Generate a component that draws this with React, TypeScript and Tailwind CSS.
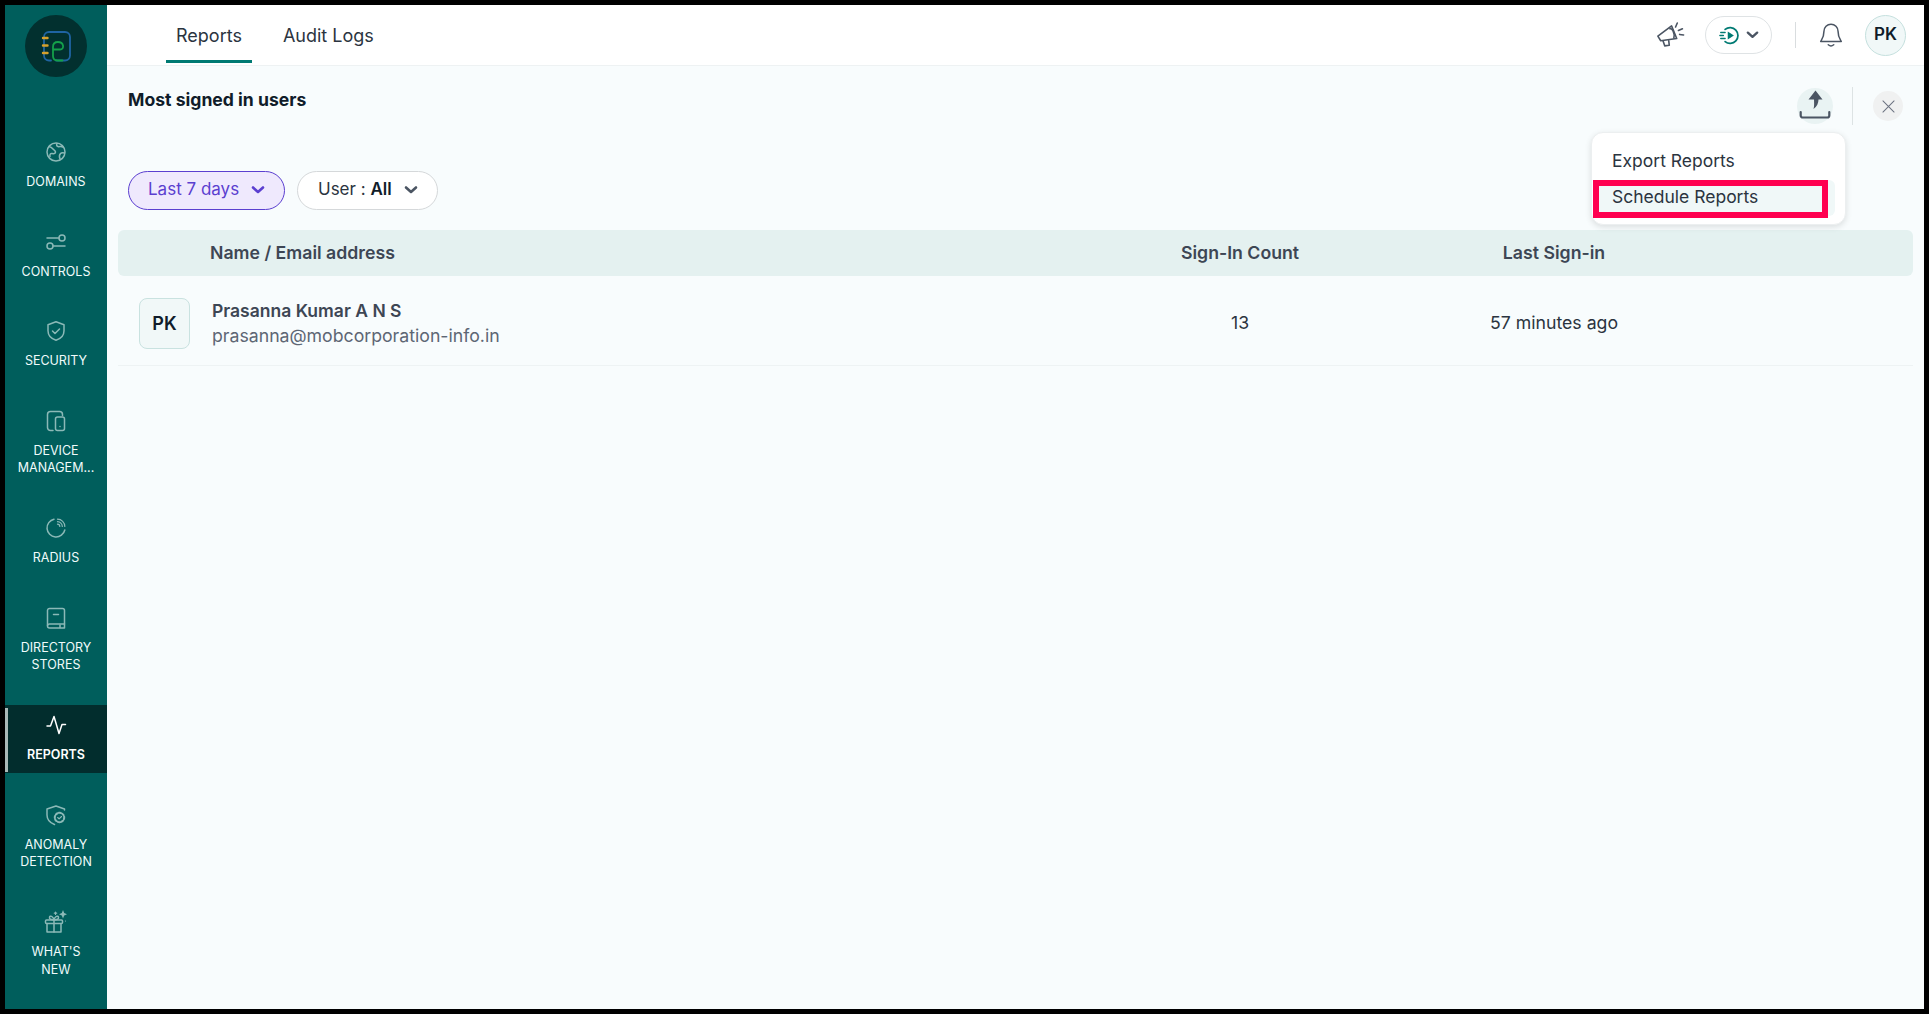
import type { ReactNode } from "react";

const uiFont = "font-['Inter','Noto_Sans',sans-serif]";

interface NavEntry {
  label: string[];
  icon: ReactNode;
  active?: boolean;
}

function NavIcon({ children, active }: { children: ReactNode; active?: boolean }) {
  return (
    <svg
      viewBox="0 0 24 24"
      className={`h-6 w-6 ${active ? "text-white" : "text-[#8bb9b7]"}`}
      fill="none"
      stroke="currentColor"
      strokeWidth="1.5"
      strokeLinecap="round"
      strokeLinejoin="round"
    >
      {children}
    </svg>
  );
}

const navItems: NavEntry[] = [
  {
    label: ["DOMAINS"],
    icon: (
      <>
        <circle cx="12" cy="12" r="9" />
        <path d="M5 6.5c2 .3 3 1.2 4 2.5s2.5 1.2 2.5 3-2 1.8-3.5 1.5-2.500 1-2 3" />
        <path d="M13 3.500c-.8 1.500-.3 2.500 1 3s3-.5 5 .5" />
        <path d="M20.500 13c-1.500-.5-3-.5-4 .5s-1.500 3-.5 5.500" />
      </>
    ),
  },
  {
    label: ["CONTROLS"],
    icon: (
      <>
        <path d="M3 8h11.500" />
        <circle cx="18" cy="8" r="3" />
        <circle cx="6" cy="16" r="3" />
        <path d="M9.500 16H21" />
      </>
    ),
  },
  {
    label: ["SECURITY"],
    icon: (
      <>
        <path d="M12 2.800 20 5.800v6c0 4.700-3.300 8-8 9.500-4.700-1.500-8-4.800-8-9.500v-6z" />
        <path d="m8.500 12 2.500 2.500 4.500-4.500" />
      </>
    ),
  },
  {
    label: ["DEVICE", "MANAGEM..."],
    icon: (
      <>
        <path d="M9 21.500H6.500a3 3 0 0 1-3-3v-13a3 3 0 0 1 3-3h9a3 3 0 0 1 3 3v1" />
        <rect x="11.500" y="8" width="9" height="13.500" rx="2" />
        <path d="M16 17.500v.01" />
      </>
    ),
  },
  {
    label: ["RADIUS"],
    icon: (
      <>
        <path d="M10 3.200A9 9 0 1 0 20.800 14" />
        <path d="M13.500 3.200a7.300 7.300 0 0 1 7.300 7.300" strokeWidth="1.2" />
        <path d="M13.500 5.700a4.800 4.800 0 0 1 4.800 4.800" strokeWidth="1.2" />
        <path d="M13.500 8.200a2.300 2.300 0 0 1 2.300 2.300" strokeWidth="1.2" />
      </>
    ),
  },
  {
    label: ["DIRECTORY", "STORES"],
    icon: (
      <>
        <path d="M20.500 18V4.500a2 2 0 0 0-2-2h-13a2 2 0 0 0-2 2v15" />
        <path d="M20.500 18h-15a2 2 0 0 0 0 4h15v-4" />
        <path d="M9.500 8.500h5" />
        <path d="M16 19v2.500" />
      </>
    ),
  },
  {
    label: ["REPORTS"],
    active: true,
    icon: <path d="M3 13h3.500L10 3.500l5 17 3-9h3.500" />,
  },
  {
    label: ["ANOMALY", "DETECTION"],
    icon: (
      <>
        <path d="M20.500 7V6L12 3 3 6v6c0 4.500 3 7.800 7.500 9.500" />
        <circle cx="15.500" cy="14.500" r="4.700" strokeDasharray="2 1.500" strokeWidth="2" />
        <path d="m13.700 14.500 1.400 1.400 2.400-2.400" strokeWidth="1.1" />
      </>
    ),
  },
  {
    label: ["WHAT'S", "NEW"],
    icon: (
      <>
        <rect x="1.500" y="10" width="17" height="3.500" rx="1" />
        <path d="M3 13.500V22h14v-8.500" />
        <path d="M10 10v12" />
        <path d="M10 10C7.500 10 5 9 5.500 7.200s3.500-1.200 4.500 2.800c1-4 4-4.600 4.500-2.800S12.500 10 10 10" />
        <path d="m19 0 1.200 3 2.800 1.200-2.800 1.200-1.200 3-1.200-3-2.800-1.200 2.800-1.200z" fill="currentColor" stroke="none" />
        <path d="M11.500 2v2.500M10.300 3.200h2.400M21.500 11v.01" strokeWidth="1.2" />
      </>
    ),
  },
];

function Logo() {
  return (
    <div className="h-[62px] w-[62px] rounded-full bg-[#02302f]">
      <svg viewBox="0 0 62 62" className="h-[62px] w-[62px]" fill="none" strokeLinecap="round" strokeLinejoin="round">
        <path d="M31 45.500h9a5 5 0 0 0 5-5V22a5 5 0 0 0-5-5H24a5 5 0 0 0-5 5v18.500a5 5 0 0 0 5 5h2" stroke="#1f64a3" strokeWidth="1.800" />
        <path d="M18 23h4.500M18 30.500h4.500M18 38h4.500" stroke="#d6a02c" strokeWidth="2.400" />
        <path d="M28 34.500h7c2.500 0 3.500-2 3-4s-2-3.500-5-3.500-5 2-5 5v9c0 3 2 4.500 4.500 4.500h5" stroke="#14a04a" strokeWidth="1.800" />
      </svg>
    </div>
  );
}

function Sidebar() {
  return (
    <aside className="flex h-full w-[102px] shrink-0 flex-col items-center bg-[#005e5c] pt-[10px]">
      <Logo />
      <nav className="mt-[55px] flex w-full flex-col gap-[21.9px]">
        {navItems.map((item) => (
          <div
            key={item.label[0]}
            className={`relative flex w-full flex-col items-center pb-[9px] pt-[8px] text-center text-[12.5px] leading-[17.7px] text-[#f0fbfb] ${
              item.active ? "bg-[#022d2d] font-semibold text-white" : ""
            }`}
          >
            {item.active && <span className="absolute bottom-[1px] left-0 top-[3px] w-[3px] bg-[#a9b9b8]" />}
            <NavIcon active={item.active}>{item.icon}</NavIcon>
            <div className="mt-[9px]">
              {item.label.map((line) => (
                <div key={line}>{line}</div>
              ))}
            </div>
          </div>
        ))}
      </nav>
    </aside>
  );
}

function Chevron({ className }: { className: string }) {
  return (
    <svg viewBox="0 0 14 10" className={className} fill="none" stroke="currentColor" strokeWidth="2.6" strokeLinecap="round" strokeLinejoin="round">
      <path d="m2 2.500 5 4.500 5-4.500" />
    </svg>
  );
}

function TopBar() {
  return (
    <header className="flex h-[61px] shrink-0 items-center justify-between border-b border-[#eef2f3] bg-white pl-[59px] pr-[18px]">
      <div className="flex h-full items-start gap-[31px] text-[18px] text-[#2b3440]">
        <div className="flex h-full flex-col px-[10px]">
          <span className="flex-1 pt-[17px] leading-[28px]">Reports</span>
          <span className="mx-[-10px] mb-[2px] h-[3px] bg-[#007a73]" />
        </div>
        <span className="pt-[17px] leading-[28px]">Audit Logs</span>
      </div>
      <div className="flex items-center">
        <svg viewBox="0 0 28 28" className="h-8 w-8 text-[#4b5563]" fill="none" stroke="currentColor" strokeWidth="1.4" strokeLinecap="round" strokeLinejoin="round">
          <path d="m2.500 15 12-9 4.500 11-14 2z" />
          <path d="M13 8.500c2-.8 4.500 4 3.500 8" />
          <path d="m7 19 1.500 4.500 4-.5-.5-4" />
          <path d="M19.500 3.500 18 7M24 8.500l-3.500 1.500M25 14l-3.500-.5" />
        </svg>
        <div className="ml-[18px] flex h-[38px] w-[67px] items-center justify-center gap-[6px] rounded-full border border-[#dfe3e5] bg-white">
          <svg viewBox="0 0 24 24" className="h-[21px] w-[21px]" fill="none" stroke="#007a73" strokeWidth="2" strokeLinecap="round">
            <path d="M7 5a9 9 0 1 1 0 14" />
            <path d="M2 8.500h5M1 12h4M2 15.500h5" strokeWidth="1.6" />
            <path d="M10 7.500v9l7-4.500z" fill="#007a73" stroke="none" />
          </svg>
          <Chevron className="h-[10px] w-[13px] text-[#4b5563]" />
        </div>
        <span className="ml-[23px] h-[26px] w-px bg-[#d9dddf]" />
        <svg viewBox="0 0 24 24" className="ml-[22px] h-[26px] w-[26px] text-[#4b5563]" fill="none" stroke="currentColor" strokeWidth="1.4" strokeLinecap="round" strokeLinejoin="round">
          <path d="M12 2a6.500 6.500 0 0 0-6.500 6.500c0 6-2.500 8-3 9.500h19c-.5-1.500-3-3.500-3-9.500A6.500 6.500 0 0 0 12 2z" />
          <path d="M9.500 21c1.500 1.300 3.500 1.300 5 0" />
        </svg>
        <div className="ml-[21px] flex h-[41px] w-[41px] items-center justify-center rounded-full border border-[#c5e0de] bg-[#f1f8f8] text-[17px] font-semibold text-[#101c2a]">
          PK
        </div>
      </div>
    </header>
  );
}

function ExportMenu() {
  return (
    <div className="absolute right-[78px] top-[66px] z-10 h-[93px] w-[255px] rounded-xl border border-[#eceff0] bg-white pl-[4px] pr-[10px] pt-[11px] text-[17.5px] text-[#2b3440] shadow-[0_2px_6px_rgba(0,0,0,0.12)]">
      <div className="h-[36px] pl-[16px] leading-[34px]">Export Reports</div>
      <div className="relative h-[36px] rounded-md bg-[#f0f8f8] pl-[16px] leading-[34px]">
        Schedule Reports
        <span className="absolute bottom-[-2px] left-[-3px] right-[7px] top-0 border-[6px] border-[#ff0050]" />
      </div>
    </div>
  );
}

export default function App() {
  return (
    <div className={`flex h-[1014px] w-[1929px] overflow-hidden border-[5px] border-black bg-[#f8fcfd] ${uiFont}`}>
      <Sidebar />
      <div className="flex min-w-0 flex-1 flex-col">
        <TopBar />
        <main className="relative flex-1 pl-[11px] pr-[11px]">
          <div className="flex items-start justify-between pl-[10px] pr-[10px] pt-[21px]">
            <h1 className="text-[17.6px] font-bold leading-[26px] text-[#101c2a]">Most signed in users</h1>
            <div className="flex items-center">
              <div className="flex h-[36px] w-[36px] items-center justify-center rounded-full bg-[#e9f3f3]">
                <svg viewBox="0 0 36 36" className="h-[36px] w-[36px] text-[#4b5563]" fill="none">
                  <path d="M18.500 2.500l7 9h-4c0 3.500-1.500 7-5 9.500 1-3.500.5-6.500.5-9.500h-5.500z" fill="currentColor" />
                  <path d="M3.700 24v3.500a2 2 0 0 0 2 2h24.600a2 2 0 0 0 2-2V24" stroke="currentColor" strokeWidth="2.2" strokeLinecap="round" />
                </svg>
              </div>
              <span className="ml-[19px] h-[38px] w-px bg-[#dde3e4]" />
              <div className="ml-[20px] flex h-[30px] w-[30px] items-center justify-center rounded-full bg-[#f0f1f1]">
                <svg viewBox="0 0 14 14" className="h-[13px] w-[13px] text-[#6b7280]" fill="none" stroke="currentColor" strokeWidth="1.1" strokeLinecap="round">
                  <path d="m1 1 12 12M13 1 1 13" />
                </svg>
              </div>
            </div>
          </div>

          <ExportMenu />

          <div className="mt-[46px] flex gap-[12px] pl-[10px]">
            <div className="flex h-[39px] w-[157px] items-center justify-between rounded-full border border-[#5b3fd0] bg-[#efe9fd] pb-[1px] pl-[19px] pr-[19px] text-[17px] text-[#5b3fd0]">
              Last 7 days
              <Chevron className="h-[10px] w-[14px]" />
            </div>
            <div className="flex h-[39px] w-[141px] items-center justify-between rounded-full border border-[#d5d8da] bg-white pb-[1px] pl-[20px] pr-[19px] text-[17px] text-[#2b3440]">
              <span>
                User : <b className="font-semibold text-[#101c2a]">All</b>
              </span>
              <Chevron className="h-[10px] w-[14px] text-[#4b5563]" />
            </div>
          </div>

          <div className="mt-[20px] grid h-[46px] grid-cols-[1002px_240px_388px_1fr] items-center rounded-md bg-[#e4f1f0] text-[17.7px] font-semibold text-[#3d4654]">
            <div className="pl-[92px]">Name / Email address</div>
            <div className="text-center">Sign-In Count</div>
            <div className="text-center">Last Sign-in</div>
          </div>

          <div className="grid h-[90px] grid-cols-[1002px_240px_388px_1fr] items-center border-b border-[#eef3f4] pt-[6px] text-[17.7px] text-[#2b3440]">
            <div className="flex items-center pl-[21px]">
              <div className="flex h-[51px] w-[51px] items-center justify-center rounded-lg border border-[#c9e2e0] bg-[#f1f8f8] text-[18px] font-semibold text-[#101c2a]">
                PK
              </div>
              <div className="ml-[22px]">
                <div className="text-[17.5px] font-semibold leading-[24px] text-[#3d4654]">Prasanna Kumar A N S</div>
                <div className="leading-[26px] text-[#5d6674]">prasanna@mobcorporation-info.in</div>
              </div>
            </div>
            <div className="text-center">13</div>
            <div className="text-center">57 minutes ago</div>
          </div>
        </main>
      </div>
    </div>
  );
}
